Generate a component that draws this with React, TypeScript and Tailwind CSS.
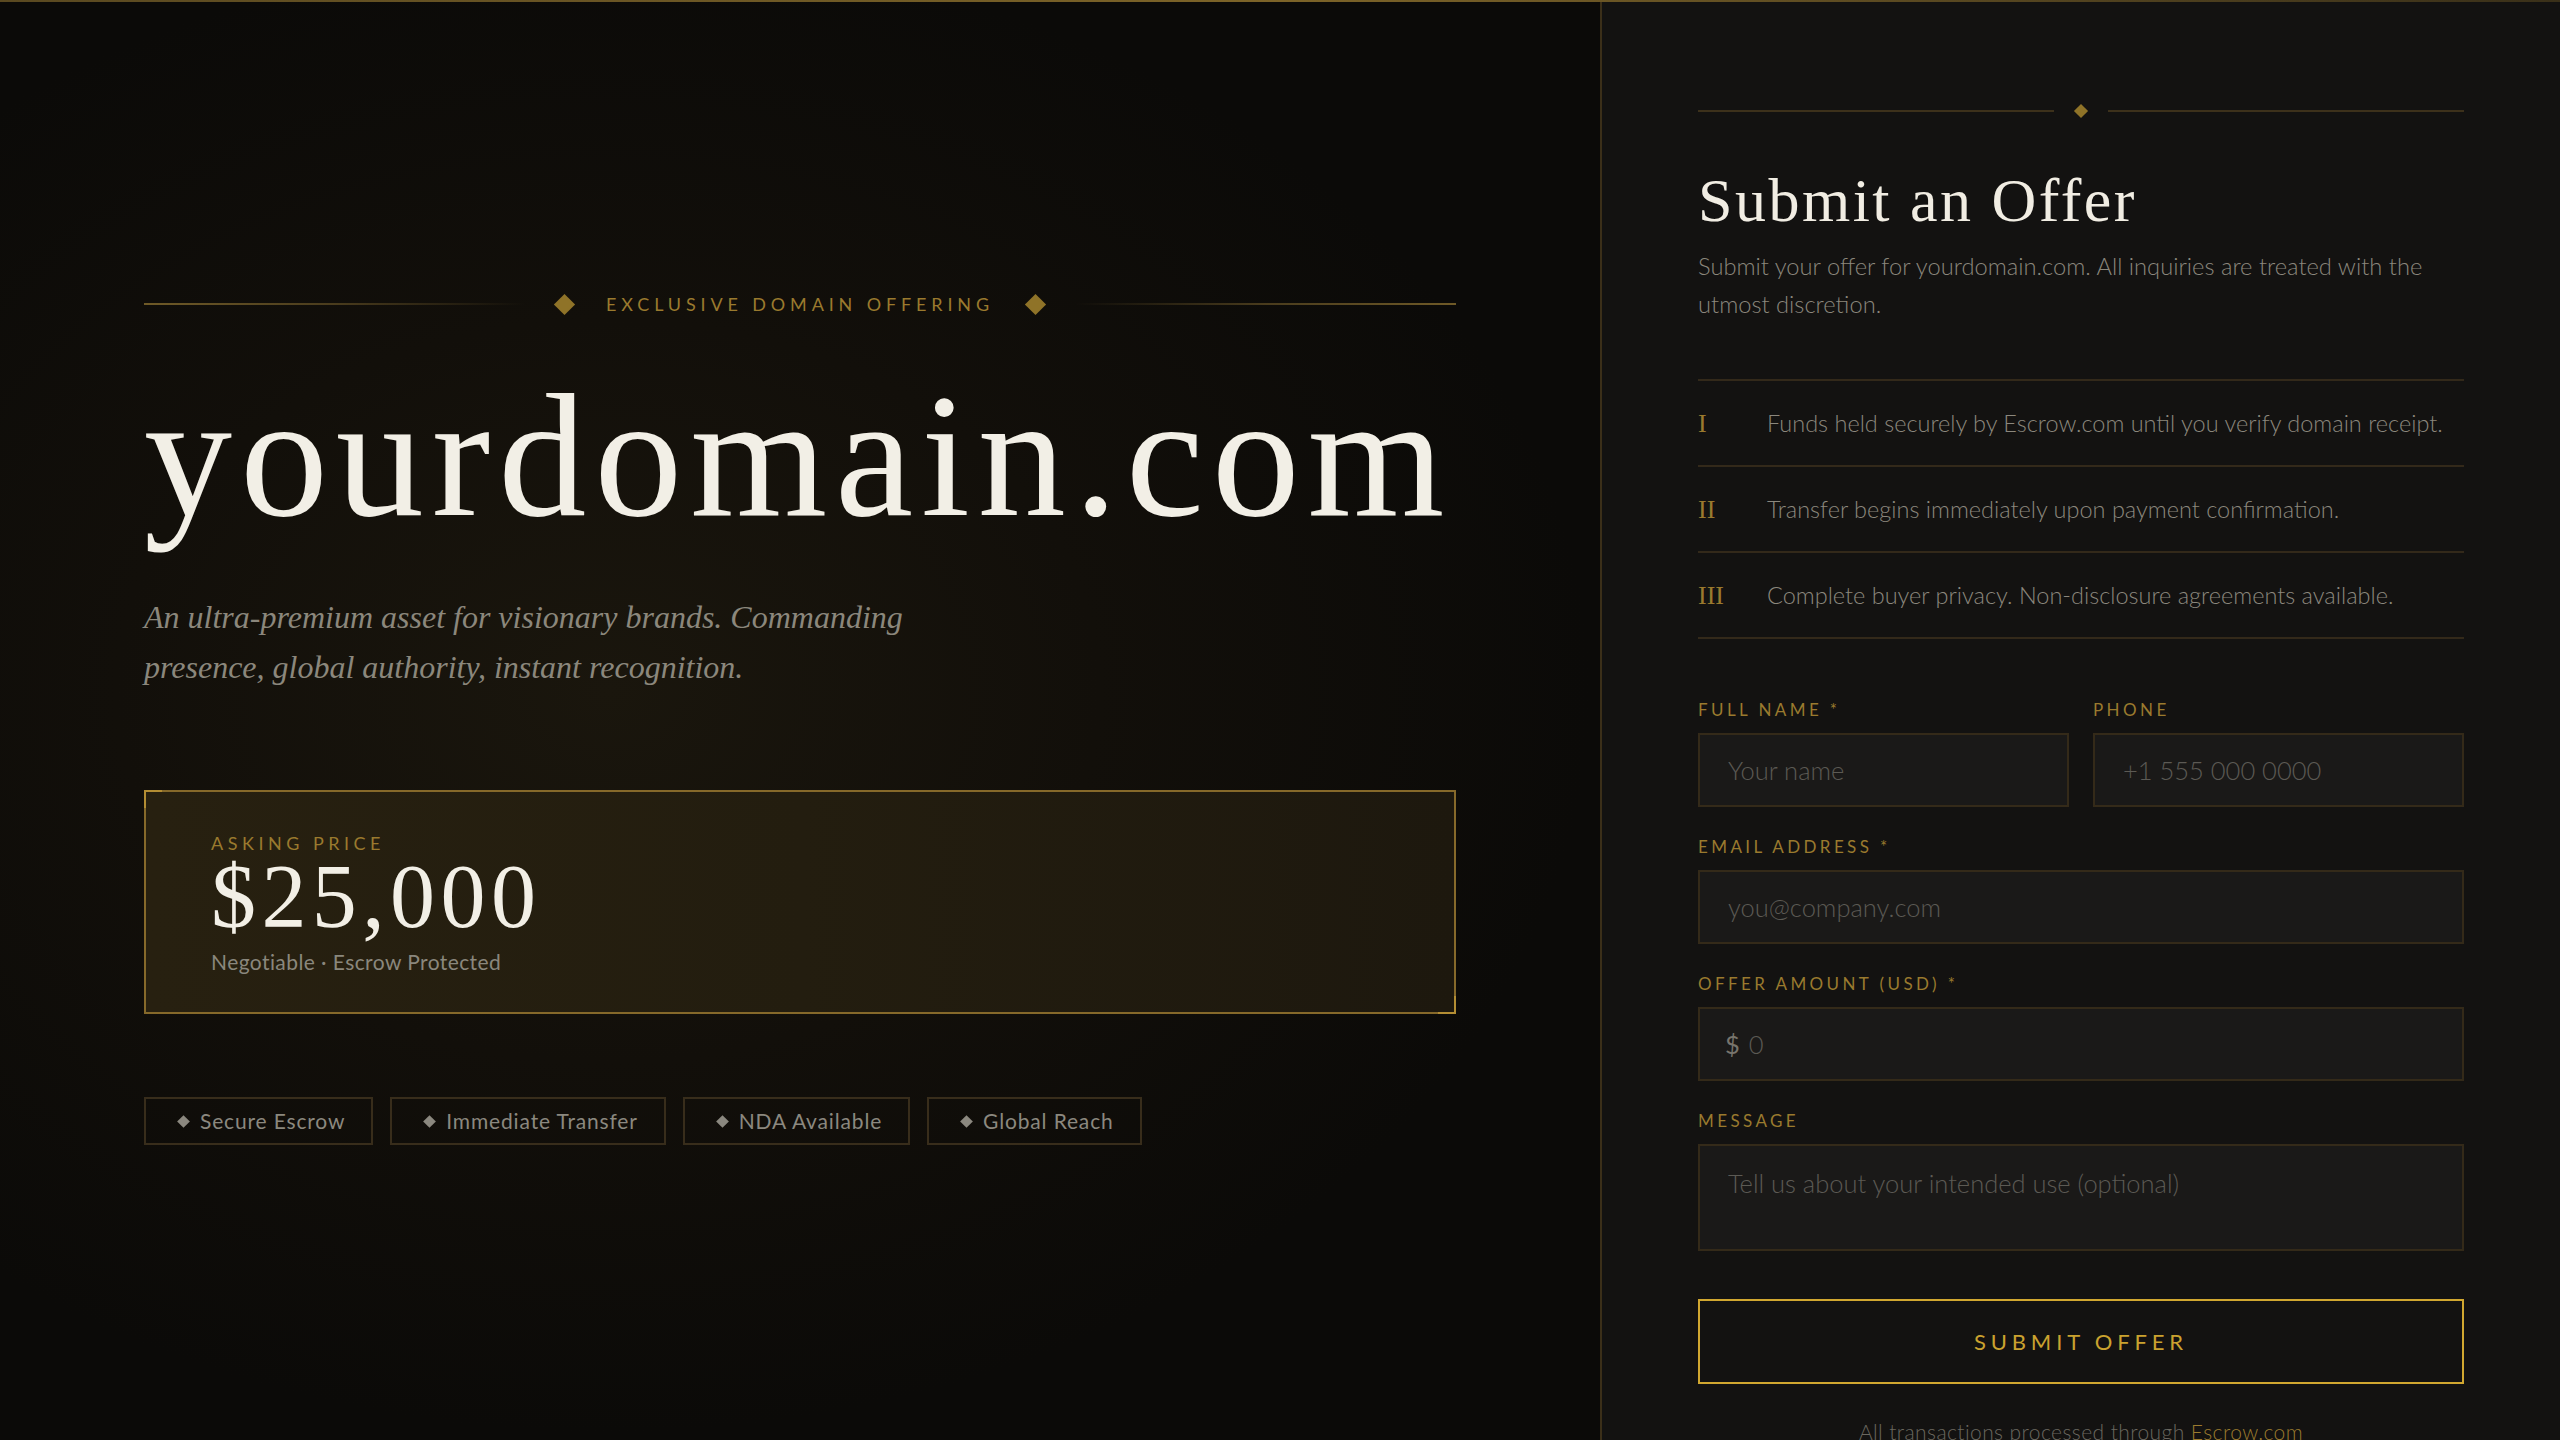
import React from 'react';

const features = ['Secure Escrow', 'Immediate Transfer', 'NDA Available', 'Global Reach'];

const terms = [
    { num: 'I', text: 'Funds held securely by Escrow.com until you verify domain receipt.' },
    { num: 'II', text: 'Transfer begins immediately upon payment confirmation.' },
    { num: 'III', text: 'Complete buyer privacy. Non-disclosure agreements available.' },
];

const inputClass =
    "h-[74px] w-full bg-[#1a1918] border-2 border-[#342a19] px-7 text-[25.5px] font-light text-[#e8e4da] outline-none placeholder:text-[#5c5a54] font-['Lato',sans-serif]";

const Label = ({ children }: { children: React.ReactNode }) => (
    <label className="block mb-[11px] text-[17px] leading-6 tracking-[0.2em] uppercase text-[#9a7a2e] font-['Lato',sans-serif]">
        {children}
    </label>
);

const Diamond = ({ size }: { size: string }) => (
    <span className={`${size} block shrink-0 rotate-45 bg-[#8f7328]`} />
);

const App = () => {
    return (
        <div className="relative flex h-screen w-full overflow-hidden bg-[#0c0b09] font-['Lato',sans-serif]">
            <div className="absolute inset-x-0 top-0 z-10 h-[2px] bg-linear-to-r from-[#5a4920] via-[#7d6428] to-[#3a3019]" />

            {/* left: domain showcase */}
            <div className="flex h-full flex-1 flex-col justify-center px-36 bg-[radial-gradient(ellipse_at_38%_48%,#1a160d_0%,#120f0a_35%,#0b0a08_70%)]">
                <div className="flex items-center">
                    <div className="h-[2px] flex-1 bg-linear-to-r from-[#6f5a27] via-[#4a3c1d] to-transparent" />
                    <div className="mx-8 flex items-center gap-[34px]">
                        <Diamond size="w-[15px] h-[15px]" />
                        <span className="text-[18px] leading-none tracking-[0.27em] uppercase text-[#9a7a2e]">
                            Exclusive Domain Offering
                        </span>
                        <Diamond size="w-[15px] h-[15px]" />
                    </div>
                    <div className="h-[2px] flex-1 bg-linear-to-l from-[#6f5a27] via-[#4a3c1d] to-transparent" />
                </div>

                <h1 className="mt-[55px] text-[176px] leading-none tracking-[0.045em] text-[#f2efe6] font-['Liberation_Serif',serif] font-normal">
                    yourdomain.com
                </h1>

                <p className="mt-[48px] max-w-[820px] text-[32px] italic leading-[50px] text-[#8b877c] font-['Liberation_Serif',serif]">
                    An ultra-premium asset for visionary brands. Commanding presence, global authority, instant recognition.
                </p>

                <div className="relative mt-[98px] border-2 border-[#86692a] bg-linear-to-r from-[#272010] via-[#231d0f] to-[#1d180e] pt-[42px] pb-[40px] pl-[65px]">
                    <span className="absolute -left-[2px] -top-[2px] h-[2px] w-[18px] bg-[#b38d33]" />
                    <span className="absolute -left-[2px] -top-[2px] h-[18px] w-[2px] bg-[#b38d33]" />
                    <span className="absolute -bottom-[2px] -right-[2px] h-[2px] w-[18px] bg-[#b38d33]" />
                    <span className="absolute -bottom-[2px] -right-[2px] h-[18px] w-[2px] bg-[#b38d33]" />
                    <div className="text-[18px] leading-none tracking-[0.25em] uppercase text-[#9a7a2e]">Asking Price</div>
                    <div className="text-[90px] leading-none tracking-[0.06em] text-[#f2efe6] font-['Liberation_Serif',serif]">
                        $25,000
                    </div>
                    <div className="mt-[9px] text-[21px] leading-none tracking-[0.02em] text-[#8a877d]">
                        Negotiable · Escrow Protected
                    </div>
                </div>

                <div className="mt-[83px] flex gap-[17px]">
                    {features.map((feature) => (
                        <div
                            key={feature}
                            className="flex h-[48px] items-center gap-[12px] border-2 border-[#382d1b] pl-[33px] pr-[26px] text-[21px] tracking-[0.04em] text-[#8b887f]"
                        >
                            <span className="block h-[9px] w-[9px] rotate-45 bg-[#8b887f]" />
                            {feature}
                        </div>
                    ))}
                </div>
            </div>

            {/* right: offer form */}
            <div className="h-full w-[960px] shrink-0 overflow-y-auto border-l-2 border-[#3b2f19] bg-[#131211]">
                <div className="pl-24 pr-24 pt-[103px] pb-[98px]">
                    <div className="flex h-[15px] items-center gap-[22px]">
                        <div className="h-[2px] flex-1 bg-[#3d311b]" />
                        <Diamond size="w-[10px] h-[10px]" />
                        <div className="h-[2px] flex-1 bg-[#3d311b]" />
                    </div>

                    <h2 className="mt-12 text-[62px] leading-[1.1] tracking-[0.04em] text-[#f1ede3] font-['Liberation_Serif',serif] font-normal">
                        Submit an Offer
                    </h2>
                    <p className="mt-[13px] text-[23.7px] font-light leading-[38px] text-[#8b877d]">
                        Submit your offer for yourdomain.com. All inquiries are treated with the utmost discretion.
                    </p>

                    <div className="mt-14 border-t-2 border-[#33291a]">
                        {terms.map((term) => (
                            <div key={term.num} className="flex h-[86px] items-center border-b-2 border-[#33291a]">
                                <span className="w-[69px] shrink-0 text-[26px] text-[#9a7a2e] font-['Liberation_Serif',serif]">
                                    {term.num}
                                </span>
                                <span className="text-[23.5px] font-light text-[#8b877d]">{term.text}</span>
                            </div>
                        ))}
                    </div>

                    <form className="mt-[59px] flex flex-col gap-7" onSubmit={(e) => e.preventDefault()}>
                        <div className="grid grid-cols-2 gap-6">
                            <div>
                                <Label>Full Name *</Label>
                                <input className={inputClass} placeholder="Your name" />
                            </div>
                            <div>
                                <Label>Phone</Label>
                                <input className={inputClass} placeholder="+1 555 000 0000" />
                            </div>
                        </div>
                        <div>
                            <Label>Email Address *</Label>
                            <input className={inputClass} placeholder="you@company.com" />
                        </div>
                        <div>
                            <Label>Offer Amount (USD) *</Label>
                            <div className="flex h-[74px] items-center border-2 border-[#342a19] bg-[#1a1918] pl-[25px]">
                                <span className="text-[25.5px] text-[#77746c]">$</span>
                                <input
                                    className="ml-[9px] h-full flex-1 bg-transparent text-[25.5px] font-light text-[#e8e4da] outline-none placeholder:text-[#5c5a54]"
                                    placeholder="0"
                                />
                            </div>
                        </div>
                        <div>
                            <Label>Message</Label>
                            <textarea
                                className="block h-[107px] w-full resize-none border-2 border-[#342a19] bg-[#1a1918] px-7 pt-[18px] text-[25.5px] font-light text-[#e8e4da] outline-none placeholder:text-[#5c5a54]"
                                placeholder="Tell us about your intended use (optional)"
                            />
                        </div>

                        <button
                            type="submit"
                            className="mt-5 h-[85px] w-full border-2 border-[#d1a730] bg-transparent text-[22px] tracking-[0.22em] uppercase text-[#caa22f]"
                        >
                            Submit Offer
                        </button>
                    </form>

                    <p className="mt-8 text-center text-[21px] font-light tracking-[0.02em] text-[#6a675f]">
                        All transactions processed through <span className="text-[#9a7a2e]">Escrow.com</span>
                    </p>
                </div>
            </div>
        </div>
    );
};

export default App;
